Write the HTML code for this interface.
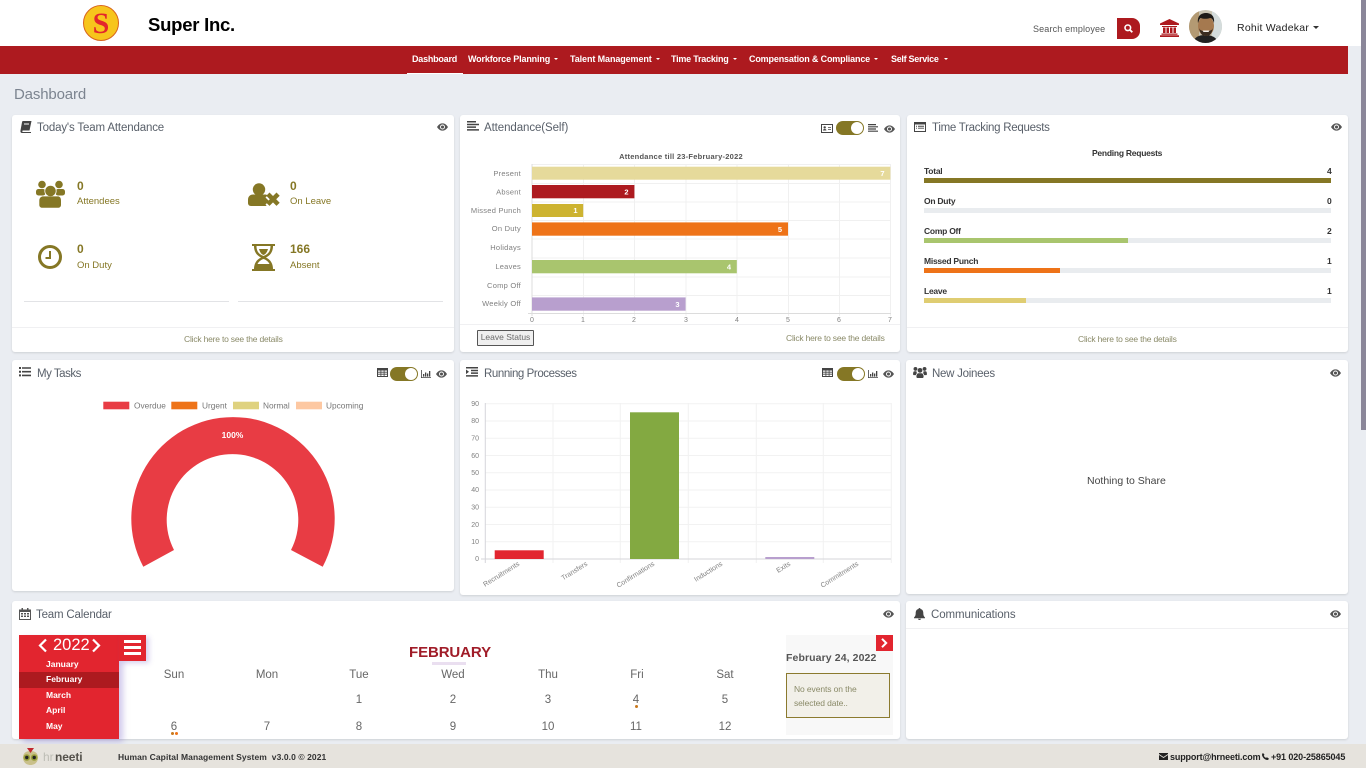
<!DOCTYPE html>
<html lang="en">
<head>
<meta charset="utf-8">
<title>Dashboard</title>
<style>
*{box-sizing:border-box;margin:0;padding:0}
html,body{width:1366px;height:768px;overflow:hidden;background:#eaedf2;font-family:"Liberation Sans",sans-serif}
.a{position:absolute;white-space:nowrap}
.t{position:absolute;white-space:nowrap;line-height:14px;height:14px}
.card{position:absolute;background:#fff;border-radius:3px;box-shadow:0 1px 2px rgba(0,0,0,.12)}
.h{position:absolute;white-space:nowrap;font-size:11.5px;line-height:14px;height:14px;color:#59606a}
.nav{position:absolute;top:52px;color:#fff;font-size:9px;font-weight:bold;line-height:14px;white-space:nowrap}
.car{position:absolute;width:0;height:0;border-left:2.5px solid transparent;border-right:2.5px solid transparent;border-top:2.5px solid #fff}
.num{position:absolute;font-size:12px;font-weight:bold;color:#857725;line-height:14px}
.lab{position:absolute;font-size:9.5px;color:#857725;line-height:14px}
.link{position:absolute;font-size:8.5px;color:#8a8a68;line-height:12px;white-space:nowrap;letter-spacing:-.2px}
.pl{position:absolute;font-size:8.5px;font-weight:bold;color:#333;line-height:12px;letter-spacing:-.25px}
.pr{position:absolute;left:924px;width:407px;height:5px;background:#e9ecef}
.pr i{display:block;height:5px}
.tog{position:absolute;width:28px;height:14px;border-radius:7px;background:#857725}
.tog i{position:absolute;right:1px;top:1px;width:12px;height:12px;border-radius:6px;background:#fff}
.m{position:absolute;left:46px;color:#fff;font-size:8.5px;font-weight:bold;line-height:12px}
.wd,.dn{position:absolute;font-size:11.5px;color:#666;line-height:14px;width:40px;text-align:center}
.ic{position:absolute;overflow:visible}
</style>
</head>
<body>
<svg width="0" height="0" style="position:absolute">
<symbol id="eye" viewBox="0 0 12 8"><path fill="#555" fill-rule="evenodd" d="M0 4C2 1 4 0 6 0s4 1 6 4c-2 3-4 4-6 4S2 7 0 4zm6-2.700a2.700 2.700 0 1 0 0 5.400 2.700 2.700 0 0 0 0-5.400z"/><circle cx="6" cy="4" r="1.700" fill="#555"/></symbol>
<symbol id="tbl" viewBox="0 0 11 9"><path fill="#444" fill-rule="evenodd" d="M0 0h11v9H0zM1 2.500v1.300h2.500V2.500zm3.300 0v1.300h2.400V2.500zm3.200 0v1.300H10V2.500zM1 4.600v1.200h2.500V4.600zm3.300 0v1.200h2.400V4.600zm3.200 0v1.200H10V4.600zM1 6.600V8h2.500V6.600zm3.300 0V8h2.400V6.600zm3.200 0V8H10V6.600z"/></symbol>
<symbol id="cht" viewBox="0 0 10 8"><path fill="#444" d="M0 0h.8v7.200H10V8H0zM2 4h1.300v2.600H2zM4 2.500h1.300v4.100H4zM6 3.500h1.300v3.100H6zM8 1h1.300v5.600H8z"/></symbol>
</svg>

<!-- top header -->
<div class="a" style="left:0;top:0;width:1348px;height:46px;background:#fff"></div>
<svg class="ic" style="left:82px;top:4px" width="38" height="38" viewBox="0 0 38 38"><circle cx="19" cy="19" r="17.500" fill="#f7c51c" stroke="#d8641c" stroke-width="1"/><text x="19" y="29" text-anchor="middle" font-family="'Liberation Serif',serif" font-weight="bold" font-size="30" fill="#e3262c">S</text></svg>
<div class="a" style="left:148px;top:13px;font-size:18.500px;line-height:24px;font-weight:bold;color:#000;letter-spacing:-.25px">Super Inc.</div>
<div class="t" style="left:1033px;top:22px;font-size:9px;color:#555;letter-spacing:.15px">Search employee</div>
<div class="a" style="left:1117px;top:18px;width:23px;height:21px;background:#ad1a1f;border-radius:0 8px 8px 0"></div>
<svg class="ic" style="left:1124px;top:24px" width="9" height="9" viewBox="0 0 9 9"><circle cx="3.800" cy="3.800" r="2.800" fill="none" stroke="#fff" stroke-width="1.600"/><path d="M5.800 5.800L8.300 8.300" stroke="#fff" stroke-width="1.800"/></svg>
<svg class="ic" style="left:1160px;top:19px" width="19" height="18" viewBox="0 0 19 18"><path fill="#ad1a1f" d="M9.500 0L19 4.500V6H0V4.500zM2 7h15v1H2zM3 8.500h2.500v5.500H3zM6.500 8.500H9v5.500H6.500zM10 8.500h2.500v5.500H10zM13.500 8.500H16v5.500h-2.500zM1.500 14.500h16v1.200h-16zM0 16.300h19V18H0z"/></svg>
<svg class="ic" style="left:1189px;top:10px" width="33" height="33" viewBox="0 0 33 33"><defs><clipPath id="av"><circle cx="16.500" cy="16.500" r="16.500"/></clipPath></defs><g clip-path="url(#av)"><rect width="33" height="33" fill="#c7c2b0"/><rect x="0" width="10" height="33" fill="#b39a73"/><rect x="23" width="10" height="33" fill="#d4dcdc"/><path fill="#222" d="M4 33c1-6 6-8 12-8s12 2 13 8z"/><ellipse cx="17" cy="16" rx="8" ry="10" fill="#a5794f"/><path fill="#1d1a17" d="M9 13c-1-7 3-10 8-10s9 3 8 10c-1-3-2-5-4-5-3 1-7 1-9 0-2 1-2 3-3 5z"/><path fill="#3a2c20" d="M10 18c1 4 2 8 7 8s6-4 7-8c-1 2-2 3-7 3s-6-1-7-3z"/><path fill="#f3f0ea" d="M13.500 20.500h7l-1 1.500h-5z"/></g></svg>
<div class="t" style="left:1237px;top:21px;font-size:10.500px;color:#222;letter-spacing:.23px">Rohit Wadekar</div>
<div class="car" style="left:1313px;top:26px;border-top-color:#333;border-left-width:3px;border-right-width:3px;border-top-width:3px"></div>

<!-- nav -->
<div class="a" style="left:0;top:46px;width:1348px;height:28px;background:#ad1a1f"></div>
<div class="a" style="left:407px;top:73px;width:56px;height:1px;background:#fff"></div>
<div class="nav" style="left:412px;letter-spacing:-.22px">Dashboard</div>
<div class="nav" style="left:468px;letter-spacing:-.155px">Workforce Planning</div><div class="car" style="left:554px;top:58px"></div>
<div class="nav" style="left:570px;letter-spacing:-.1px">Talent Management</div><div class="car" style="left:656px;top:58px"></div>
<div class="nav" style="left:671px;letter-spacing:-.22px">Time Tracking</div><div class="car" style="left:733px;top:58px"></div>
<div class="nav" style="left:749px;letter-spacing:-.16px">Compensation &amp; Compliance</div><div class="car" style="left:874px;top:58px"></div>
<div class="nav" style="left:891px;letter-spacing:-.29px">Self Service</div><div class="car" style="left:944px;top:58px"></div>

<!-- scrollbar -->
<div class="a" style="left:1348px;top:0;width:13px;height:46px;background:#fff"></div>
<div class="a" style="left:1361px;top:0;width:5px;height:430px;background:#8a8699"></div>
<div class="a" style="left:14px;top:85px;font-size:15px;line-height:20px;color:#7c8490;letter-spacing:-.15px">Dashboard</div>

<!-- Card 1 -->
<div class="card" style="left:12px;top:115px;width:442px;height:237px"></div>
<svg class="ic" style="left:20px;top:121px" width="12" height="12" viewBox="0 0 12 12"><path fill="#444" fill-rule="evenodd" d="M3 0h8.500L9.500 9.500H3c-1 0-1 1.500 0 1.500h8L11 12H2C.8 12 .2 11 .5 9.500L2 1.200C2.100.5 2.500 0 3 0zm1 2.500v1h5v-1z"/></svg>
<div class="h" style="left:37px;top:121px;letter-spacing:-.15px">Today's Team Attendance</div>
<svg class="ic" style="left:437px;top:123px" width="11" height="8"><use href="#eye"/></svg>
<svg class="ic" style="left:36px;top:180px" width="29" height="28" viewBox="0 0 29 28"><g fill="#857725"><circle cx="6" cy="4.500" r="3.800"/><circle cx="23" cy="4.500" r="3.800"/><rect x="0" y="9" width="9.500" height="6.500" rx="2.500"/><rect x="19.500" y="9" width="9.500" height="6.500" rx="2.500"/><circle cx="14.500" cy="11" r="5.700" stroke="#fff" stroke-width=".8"/><path d="M3.300 20.700c0-3 2-4.300 4-4.300h14.400c2 0 3.300 1.300 3.300 4.300v4c0 2-1.300 3-3 3H6.300c-1.700 0-3-1-3-3z"/></g></svg>
<svg class="ic" style="left:248px;top:183px" width="32" height="25" viewBox="0 0 32 25"><g fill="#857725"><circle cx="11" cy="6.500" r="6.200"/><path d="M0 17c0-3.500 2-5.500 5-5.500h12c1 0 2 .3 2.500 1l-2 2 3.500 3.500-3.500 3.500 1.200 1.500H3c-2 0-3-1.500-3-3z"/><path d="M21.500 9.500l3.500 3.500 3.500-3.500 3.200 3.200-3.500 3.500 3.500 3.500-3.200 3.200-3.500-3.500-3.500 3.500-3.200-3.200 3.500-3.500-3.500-3.500z"/></g></svg>
<svg class="ic" style="left:38px;top:245px" width="24" height="24" viewBox="0 0 24 24"><circle cx="12" cy="12" r="10.500" fill="none" stroke="#857725" stroke-width="3"/><path d="M12 6v7H7.500" fill="none" stroke="#857725" stroke-width="2"/></svg>
<svg class="ic" style="left:252px;top:244px" width="23" height="27" viewBox="0 0 23 27"><path fill="#857725" fill-rule="evenodd" d="M0 0h23v2h-2c0 5-2 9-7 11.500 5 2.500 7 6.500 7 11.500h2v2H0v-2h2c0-5 2-9 7-11.500C4 11 2 7 2 2H0zM4.500 2c0 5 2 8 7 10 5-2 7-5 7-10zm7 13c-3 1-5 3-6 5h12c-1-2-3-4-6-5z"/><path fill="#857725" d="M3 20h17v5H3zM7 5h9c-1 3-2 5-4.500 6C9 10 8 8 7 5z"/></svg>
<div class="num" style="left:77px;top:179px">0</div><div class="lab" style="left:77px;top:195px">Attendees</div>
<div class="num" style="left:290px;top:179px">0</div><div class="lab" style="left:290px;top:195px">On Leave</div>
<div class="num" style="left:77px;top:242px">0</div><div class="lab" style="left:77px;top:259px">On Duty</div>
<div class="num" style="left:290px;top:242px">166</div><div class="lab" style="left:290px;top:259px">Absent</div>
<div class="a" style="left:24px;top:301px;width:205px;height:1px;background:#e2e3e6"></div>
<div class="a" style="left:238px;top:301px;width:205px;height:1px;background:#e2e3e6"></div>
<div class="a" style="left:12px;top:327px;width:442px;height:1px;background:#f0f0f2"></div>
<div class="link" style="left:184px;top:333px">Click here to see the details</div>

<!-- Card 2 -->
<div class="card" style="left:460px;top:115px;width:440px;height:237px"></div>
<svg class="ic" style="left:467px;top:121px" width="12" height="10" viewBox="0 0 12 10"><path fill="#444" d="M0 0h9v1.500H0zM0 2.700h12v1.500H0zM0 5.400h9v1.500H0zM0 8.100h12v1.500H0z"/></svg>
<div class="h" style="left:484px;top:121px;letter-spacing:-.09px">Attendance(Self)</div>
<svg class="ic" style="left:821px;top:124px" width="12" height="9" viewBox="0 0 12 9"><path fill="#444" fill-rule="evenodd" d="M0 0h12v9H0zM1 1v7h10V1zM2 6.500c0-1 .5-1.500 1.700-1.500s1.700.5 1.700 1.500zM3.700 2.200a1.200 1.200 0 1 1 0 2.400 1.200 1.200 0 0 1 0-2.400zM7 3h3v.8H7zM7 5h3v.8H7z"/></svg>
<div class="tog" style="left:836px;top:121px"><i></i></div>
<svg class="ic" style="left:868px;top:124px" width="10" height="8" viewBox="0 0 10 8"><path fill="#444" d="M0 0h8v1.200H0zM0 2.200h10v1.200H0zM0 4.400h8v1.200H0zM0 6.600h10v1.200H0z"/></svg>
<svg class="ic" style="left:884px;top:125px" width="11" height="8"><use href="#eye"/></svg>

<svg class="ic" style="left:460px;top:150px;filter:blur(.3px)" width="440" height="175" viewBox="460 150 440 175" font-family="'Liberation Sans',sans-serif">
<g stroke="#f0f0f0" stroke-width="1"><path d="M532 164.500H890M532 183.500H890M532 202H890M532 220.500H890M532 239H890M532 258H890M532 277H890M532 295.500H890M583.500 164V316M634.500 164V316M686 164V316M737 164V316M788.500 164V316M839.500 164V316M890.500 164V316"/></g>
<path d="M532 164V316M528 313.500H891" stroke="#dcdcdc" fill="none"/>
<text x="681" y="159" text-anchor="middle" font-size="7.500" font-weight="bold" fill="#555" letter-spacing=".25">Attendance till 23-February-2022</text>
<rect x="532" y="166.700" width="358.400" height="13" fill="#e6da9b"/>
<rect x="532" y="185" width="102.400" height="13.300" fill="#ad1a1f"/>
<rect x="532" y="204" width="51.200" height="13" fill="#cdb330"/>
<rect x="532" y="222.400" width="256" height="13.300" fill="#ee7318"/>
<rect x="532" y="260" width="204.800" height="13.300" fill="#a9c56e"/>
<rect x="532" y="297.400" width="153.600" height="13.300" fill="#b89fce"/>
<g font-size="7.500" fill="#fff" font-weight="bold" text-anchor="middle">
<text x="882.500" y="176">7</text><text x="626.500" y="194.500">2</text><text x="575.500" y="213">1</text><text x="780" y="232">5</text><text x="729" y="269.500">4</text><text x="677.500" y="307">3</text></g>
<g font-size="7.500" fill="#808080" text-anchor="end" letter-spacing=".25">
<text x="521" y="176">Present</text><text x="521" y="194.500">Absent</text><text x="521" y="213">Missed Punch</text><text x="521" y="231">On Duty</text><text x="521" y="250">Holidays</text><text x="521" y="269">Leaves</text><text x="521" y="288">Comp Off</text><text x="521" y="306">Weekly Off</text></g>
<g font-size="7" fill="#808080" text-anchor="middle"><text x="532" y="322">0</text><text x="583" y="322">1</text><text x="634" y="322">2</text><text x="686" y="322">3</text><text x="737" y="322">4</text><text x="788" y="322">5</text><text x="839" y="322">6</text><text x="890" y="322">7</text></g>
</svg>
<div class="a" style="left:460px;top:324px;width:440px;height:1px;background:#f0f0f2"></div>
<div class="a" style="left:477px;top:330px;width:57px;height:16px;border:1px solid #555;background:#efefef;color:#6b6b6b;font-size:8.500px;line-height:13px;text-align:center;border-radius:1px">Leave Status</div>
<div class="link" style="left:786px;top:332px">Click here to see the details</div>

<!-- Card 3 -->
<div class="card" style="left:907px;top:115px;width:441px;height:237px"></div>
<svg class="ic" style="left:914px;top:122px" width="12" height="10" viewBox="0 0 12 10"><path fill="#444" fill-rule="evenodd" d="M0 0h12v10H0zM1 2.500V9h10V2.500zM2 3.800h1v.9H2zM4 3.800h6v.9H4zM2 5.700h1v.9H2zM4 5.700h6v.9H4z"/></svg>
<div class="h" style="left:932px;top:121px;letter-spacing:-.27px">Time Tracking Requests</div>
<svg class="ic" style="left:1331px;top:123px" width="11" height="8"><use href="#eye"/></svg>
<div class="pl" style="left:1092px;top:147px">Pending Requests</div>
<div class="pl" style="left:924px;top:165px">Total</div><div class="pl" style="left:1327px;top:165px">4</div>
<div class="pr" style="top:178px"><i style="width:100%;background:#857725"></i></div>
<div class="pl" style="left:924px;top:195px">On Duty</div><div class="pl" style="left:1327px;top:195px">0</div>
<div class="pr" style="top:208px"></div>
<div class="pl" style="left:924px;top:225px">Comp Off</div><div class="pl" style="left:1327px;top:225px">2</div>
<div class="pr" style="top:238px"><i style="width:204px;background:#a9c56e"></i></div>
<div class="pl" style="left:924px;top:255px">Missed Punch</div><div class="pl" style="left:1327px;top:255px">1</div>
<div class="pr" style="top:268px"><i style="width:136px;background:#ee7318"></i></div>
<div class="pl" style="left:924px;top:285px">Leave</div><div class="pl" style="left:1327px;top:285px">1</div>
<div class="pr" style="top:298px"><i style="width:102px;background:#dfcd72"></i></div>
<div class="a" style="left:907px;top:327px;width:441px;height:1px;background:#f0f0f2"></div>
<div class="link" style="left:1078px;top:333px">Click here to see the details</div>

<!-- My Tasks -->
<div class="card" style="left:12px;top:360px;width:442px;height:231px"></div>
<svg class="ic" style="left:19px;top:367px" width="12" height="10" viewBox="0 0 12 10"><path fill="#444" d="M0 0h2v2H0zM3 .2h9v1.600H3zM0 3.700h2v2H0zM3 3.900h9v1.600H3zM0 7.400h2v2H0zM3 7.600h9v1.600H3z"/></svg>
<div class="h" style="left:37px;top:367px;letter-spacing:-.47px">My Tasks</div>
<svg class="ic" style="left:377px;top:368px" width="11" height="9"><use href="#tbl"/></svg>
<div class="tog" style="left:390px;top:367px"><i></i></div>
<svg class="ic" style="left:421px;top:370px" width="10" height="8"><use href="#cht"/></svg>
<svg class="ic" style="left:436px;top:370px" width="11" height="8"><use href="#eye"/></svg>
<svg class="ic" style="left:12px;top:395px" width="442" height="190" viewBox="12 395 442 190" font-family="'Liberation Sans',sans-serif">
<rect x="103.300" y="401.700" width="26" height="7.600" fill="#e83c44"/><text x="134" y="408.500" font-size="8.300" fill="#777">Overdue</text>
<rect x="171.300" y="401.700" width="26" height="7.600" fill="#ee7318"/><text x="202" y="408.500" font-size="8.300" fill="#777">Urgent</text>
<rect x="233" y="401.700" width="26" height="7.600" fill="#dfd27f"/><text x="263" y="408.500" font-size="8.300" fill="#777">Normal</text>
<rect x="296" y="401.700" width="26" height="7.600" fill="#fdc8a2"/><text x="326" y="408.500" font-size="8.300" fill="#777">Upcoming</text>
<path fill="#e83c44" d="M143.300 566.700A101.700 101.700 0 1 1 322.700 566.700L291 550A65.800 65.800 0 1 0 174 550Z"/>
<text x="232.500" y="438" text-anchor="middle" font-size="8.500" font-weight="bold" fill="#fff">100%</text>
</svg>

<!-- Running Processes -->
<div class="card" style="left:460px;top:360px;width:440px;height:235px"></div>
<svg class="ic" style="left:466px;top:367px" width="12" height="10" viewBox="0 0 12 10"><path fill="#444" d="M0 0h12v1.500H0zM5 2.700h7v1.500H5zM5 5.400h7v1.500H5zM0 8.100h12v1.500H0zM0 2.500l3 2.300-3 2.300z"/></svg>
<div class="h" style="left:484px;top:367px;letter-spacing:-.42px">Running Processes</div>
<svg class="ic" style="left:822px;top:368px" width="11" height="9"><use href="#tbl"/></svg>
<div class="tog" style="left:837px;top:367px"><i></i></div>
<svg class="ic" style="left:868px;top:370px" width="10" height="8"><use href="#cht"/></svg>
<svg class="ic" style="left:883px;top:370px" width="11" height="8"><use href="#eye"/></svg>
<svg class="ic" style="left:460px;top:395px;filter:blur(.3px)" width="440" height="200" viewBox="460 395 440 200" font-family="'Liberation Sans',sans-serif">
<g stroke="#f2f2f2"><path d="M485 403.700H891M485 421H891M485 438.200H891M485 455.500H891M485 472.800H891M485 490H891M485 507.300H891M485 524.500H891M485 541.800H891M553 403V563M620.300 403V563M688.300 403V563M756.300 403V563M823.300 403V563M891.300 403V563"/></g>
<path d="M485.300 403V563M481 559H891" stroke="#d5d5da" fill="none"/>
<rect x="494.700" y="550.300" width="49" height="8.700" fill="#e2252f"/>
<rect x="630" y="412.300" width="49" height="146.700" fill="#83a941"/>
<rect x="765.300" y="557" width="49" height="2" fill="#b89fce"/>
<g font-size="7" fill="#808080" text-anchor="end"><text x="479" y="406">90</text><text x="479" y="423">80</text><text x="479" y="440.500">70</text><text x="479" y="458">60</text><text x="479" y="475">50</text><text x="479" y="492">40</text><text x="479" y="509.500">30</text><text x="479" y="527">20</text><text x="479" y="544">10</text><text x="479" y="561">0</text></g>
<g font-size="7" fill="#808080" text-anchor="end">
<text transform="translate(520 565) rotate(-32)">Recruitments</text>
<text transform="translate(588 565) rotate(-32)">Transfers</text>
<text transform="translate(655 565) rotate(-32)">Confirmations</text>
<text transform="translate(723 565) rotate(-32)">Inductions</text>
<text transform="translate(791 565) rotate(-32)">Exits</text>
<text transform="translate(859 565) rotate(-32)">Commitments</text></g>
</svg>

<!-- New Joinees -->
<div class="card" style="left:906px;top:360px;width:442px;height:234px"></div>
<svg class="ic" style="left:913px;top:367px" width="14" height="11" viewBox="0 0 29 23"><g fill="#444"><circle cx="5" cy="4" r="4"/><circle cx="24" cy="4" r="4"/><circle cx="14.500" cy="7" r="5"/><path d="M0 15c0-4 1-6 3-6h4l1 4c-1 1-2 2-2 4H1.500C.5 17 0 16 0 15zM29 15c0-4-1-6-3-6h-4l-1 4c1 1 2 2 2 4h4.500c1 0 1.500-1 1.500-2zM7 20c0-4 2-7 4-7h7c2 0 4 3 4 7 0 2-1 3-3 3H10c-2 0-3-1-3-3z"/></g></svg>
<div class="h" style="left:932px;top:367px;letter-spacing:-.27px">New Joinees</div>
<svg class="ic" style="left:1330px;top:369px" width="11" height="8"><use href="#eye"/></svg>
<div class="t" style="left:1087px;top:474px;font-size:10.500px;color:#444">Nothing to Share</div>

<!-- Team Calendar -->
<div class="card" style="left:12px;top:601px;width:888px;height:138px;overflow:hidden"></div>
<svg class="ic" style="left:19px;top:608px" width="12" height="12" viewBox="0 0 12 12"><path fill="#555" fill-rule="evenodd" d="M0 1.500h2.500V0h1.500v1.500h4V0h1.500v1.500H12V12H0zM1 4v7h10V4zM2 5h2v1.500H2zM5 5h2v1.500H5zM8 5h2v1.500H8zM2 7.500h2V9H2zM5 7.500h2V9H5zM8 7.500h2V9H8z"/></svg>
<div class="h" style="left:36px;top:608px;letter-spacing:-.18px">Team Calendar</div>
<svg class="ic" style="left:883px;top:610px" width="11" height="8"><use href="#eye"/></svg>

<div class="a" style="left:19px;top:635px;width:100px;height:104px;background:#e2252f;box-shadow:4px 3px 6px rgba(120,100,200,.35)"></div>
<div class="a" style="left:119px;top:635px;width:27px;height:26px;background:#e2252f;box-shadow:3px 2px 5px rgba(120,100,200,.3)"></div>
<svg class="ic" style="left:37px;top:638px" width="11" height="15" viewBox="0 0 11 15"><path d="M9 1.500L3 7.500l6 6" fill="none" stroke="#fff" stroke-width="2.200"/></svg>
<svg class="ic" style="left:91px;top:638px" width="11" height="15" viewBox="0 0 11 15"><path d="M2 1.500l6 6-6 6" fill="none" stroke="#fff" stroke-width="2.200"/></svg>
<div class="a" style="left:53px;top:635px;font-size:16.500px;line-height:20px;color:#fff">2022</div>
<svg class="ic" style="left:124px;top:640px" width="17" height="15"><path fill="#fff" d="M0 0h17v3H0zM0 6h17v3H0zM0 12h17v3H0z"/></svg>
<div class="a" style="left:19px;top:672px;width:100px;height:16px;background:#ad1a1f"></div>
<div class="m" style="top:658px">January</div>
<div class="m" style="top:673px">February</div>
<div class="m" style="top:689px">March</div>
<div class="m" style="top:704px">April</div>
<div class="m" style="top:720px">May</div>

<div class="a" style="left:409px;top:644px;font-size:15px;line-height:18px;font-weight:bold;color:#a01c28;letter-spacing:-.1px">FEBRUARY</div>
<div class="a" style="left:432px;top:662px;width:34px;height:3px;background:#eadff0"></div>
<div class="wd" style="left:154px;top:668px">Sun</div><div class="wd" style="left:247px;top:668px">Mon</div><div class="wd" style="left:339px;top:668px">Tue</div><div class="wd" style="left:433px;top:668px">Wed</div><div class="wd" style="left:528px;top:668px">Thu</div><div class="wd" style="left:617px;top:668px">Fri</div><div class="wd" style="left:705px;top:668px">Sat</div>
<div class="dn" style="left:339px;top:693px">1</div><div class="dn" style="left:433px;top:693px">2</div><div class="dn" style="left:528px;top:693px">3</div><div class="dn" style="left:616px;top:693px">4</div><div class="dn" style="left:705px;top:693px">5</div>
<div class="dn" style="left:154px;top:720px">6</div><div class="dn" style="left:247px;top:720px">7</div><div class="dn" style="left:339px;top:720px">8</div><div class="dn" style="left:433px;top:720px">9</div><div class="dn" style="left:528px;top:720px">10</div><div class="dn" style="left:616px;top:720px">11</div><div class="dn" style="left:705px;top:720px">12</div>
<div class="a" style="left:635px;top:705px;width:3px;height:3px;border-radius:2px;background:#c9781c"></div>
<div class="a" style="left:171px;top:732px;width:3px;height:3px;border-radius:2px;background:#c9781c"></div>
<div class="a" style="left:175px;top:732px;width:3px;height:3px;border-radius:2px;background:#ee7318"></div>

<div class="a" style="left:786px;top:635px;width:107px;height:100px;background:#f8f8f8"></div>
<div class="a" style="left:876px;top:635px;width:17px;height:16px;background:#e2252f"></div>
<svg class="ic" style="left:880px;top:638px" width="9" height="10" viewBox="0 0 9 10"><path d="M2 .8L6.200 5 2 9.200" fill="none" stroke="#fff" stroke-width="2"/></svg>
<div class="a" style="left:786px;top:651px;font-size:10.500px;line-height:14px;font-weight:bold;color:#555;letter-spacing:.1px">February 24, 2022</div>
<div class="a" style="left:786px;top:673px;width:104px;height:45px;background:#f2f0e9;border:1px solid #8b7a2e;color:#8a8a68;font-size:8.500px;letter-spacing:-.1px;line-height:14px;padding:8px 7px 0 7px;white-space:normal">No events on the<br>selected date..</div>

<!-- Communications -->
<div class="card" style="left:906px;top:601px;width:442px;height:138px"></div>
<svg class="ic" style="left:914px;top:608px" width="11" height="12" viewBox="0 0 11 12"><path fill="#444" d="M5.500 0c.6 0 1 .4 1 1 2 .4 2.800 2 2.800 4 0 2.500.7 3.500 1.700 4.500v.7H0v-.7C1 8.500 1.700 7.500 1.700 5c0-2 .8-3.600 2.800-4 0-.6.4-1 1-1zM4 10.800h3c0 .7-.7 1.200-1.500 1.200S4 11.500 4 10.800z"/></svg>
<div class="h" style="left:931px;top:608px;letter-spacing:-.08px">Communications</div>
<svg class="ic" style="left:1330px;top:610px" width="11" height="8"><use href="#eye"/></svg>
<div class="a" style="left:906px;top:628px;width:442px;height:1px;background:#f0f0f2"></div>

<!-- Footer -->
<div class="a" style="left:0;top:744px;width:1366px;height:24px;background:#e6e3dd"></div>
<svg class="ic" style="left:23px;top:748px" width="60" height="18" viewBox="0 0 60 18" font-family="'Liberation Sans',sans-serif"><path d="M7.500 17C3 17 0 14 0 9.500S3 3 7.500 3 15 5 15 9.500 12 17 7.500 17z" fill="#c9c08a"/><circle cx="3.800" cy="9.500" r="3.300" fill="#9aa03c"/><circle cx="11.200" cy="9.500" r="3.300" fill="#9aa03c"/><circle cx="3.800" cy="9.500" r="1.700" fill="#222"/><circle cx="11.200" cy="9.500" r="1.700" fill="#222"/><path d="M4 0h7L7.500 5z" fill="#c0272d"/><text x="20" y="13" font-size="12" fill="#bdbdb5">hr</text><text x="32" y="13" font-size="12" font-weight="bold" fill="#55524c" letter-spacing="-.1">neeti</text></svg>
<div class="a" style="left:118px;top:750px;font-size:8.500px;line-height:14px;font-weight:bold;color:#333;letter-spacing:.08px">Human Capital Management System&nbsp; v3.0.0 © 2021</div>
<svg class="ic" style="left:1159px;top:753px" width="9" height="7" viewBox="0 0 9 7"><path fill="#222" d="M0 0h9v1L4.500 4 0 1zM0 2l4.500 3L9 2v5H0z"/></svg>
<div class="a" style="left:1170px;top:750px;font-size:9px;line-height:14px;font-weight:bold;color:#222;letter-spacing:-.15px">support@hrneeti.com</div>
<svg class="ic" style="left:1262px;top:753px" width="7" height="7" viewBox="0 0 7 7"><path fill="#222" d="M1 0l1.500 1.700-.7 1c.5 1 1.200 1.700 2.200 2.200l1-.7L7 5.700C6.500 6.700 5.700 7 5 7 2.500 6.500.5 4.500 0 2c0-.7.300-1.500 1-2z"/></svg>
<div class="a" style="left:1271px;top:750px;font-size:9px;line-height:14px;font-weight:bold;color:#222;letter-spacing:-.1px">+91 020-25865045</div>
</body>
</html>
